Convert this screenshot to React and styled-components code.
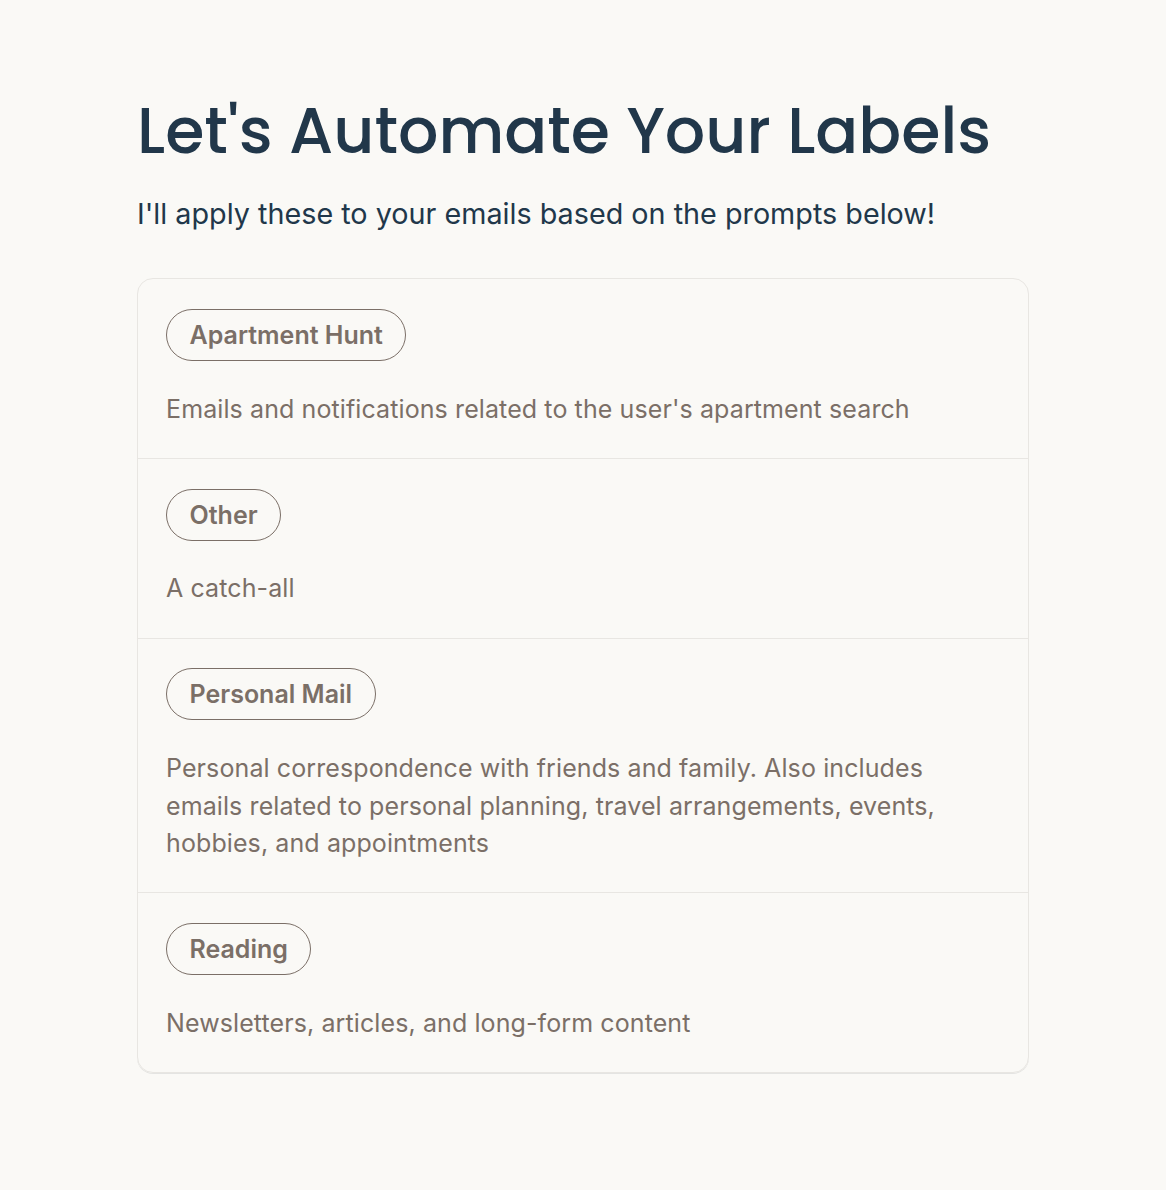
import React from "react";
import styled, { createGlobalStyle } from "styled-components";

const Global = createGlobalStyle`
  html, body { margin: 0; padding: 0; background: #faf9f6; }
  body { font-family: Inter, "Noto Sans", sans-serif; -webkit-font-smoothing: antialiased; }
`;

const Page = styled.main`
  max-width: 892px;
  margin: 0 auto;
  padding: 93px 0 80px;
`;

const Title = styled.h1`
  margin: 0;
  font-family: Poppins, Inter, "Noto Sans", sans-serif;
  font-weight: 500;
  font-size: 63.4px;
  line-height: 75px;
  color: #21374a;
`;

const Subtitle = styled.p`
  margin: 24px 0 43px;
  font-size: 28.75px;
  line-height: 43px;
  color: #21374a;
`;

const Card = styled.section`
  border: 1px solid #e8e6e2;
  border-radius: 16px;
  box-shadow: 0 1px 0 #e4e4e2;
  overflow: hidden;
`;

const Row = styled.div`
  display: flex;
  flex-direction: column;
  align-items: flex-start;
  gap: 29.75px;
  padding: 29.75px 28px;
  & + & { border-top: 1px solid #e8e6e2; }
`;

const Pill = styled.span`
  box-sizing: border-box;
  display: inline-block;
  border: 1px solid #7b6f67;
  border-radius: 999px;
  padding: 0 22.5px;
  height: 52px;
  line-height: 50px;
  font-size: 25px;
  font-weight: 600;
  color: #7b6f67;
`;

const Desc = styled.p`
  margin: 0;
  font-size: 25px;
  line-height: 37.5px;
  letter-spacing: 0.1px;
  color: #7b6f67;
`;

const labels = [
  { name: "Apartment Hunt", desc: "Emails and notifications related to the user's apartment search" },
  { name: "Other", desc: "A catch-all" },
  { name: "Personal Mail", desc: "Personal correspondence with friends and family. Also includes emails related to personal planning, travel arrangements, events, hobbies, and appointments" },
  { name: "Reading", desc: "Newsletters, articles, and long-form content" },
];

export default function App() {
  return (
    <>
      <Global />
      <Page>
        <Title>Let's Automate Your Labels</Title>
        <Subtitle>I'll apply these to your emails based on the prompts below!</Subtitle>
        <Card>
          {labels.map((l) => (
            <Row key={l.name}>
              <Pill>{l.name}</Pill>
              <Desc>{l.desc}</Desc>
            </Row>
          ))}
        </Card>
      </Page>
    </>
  );
}
